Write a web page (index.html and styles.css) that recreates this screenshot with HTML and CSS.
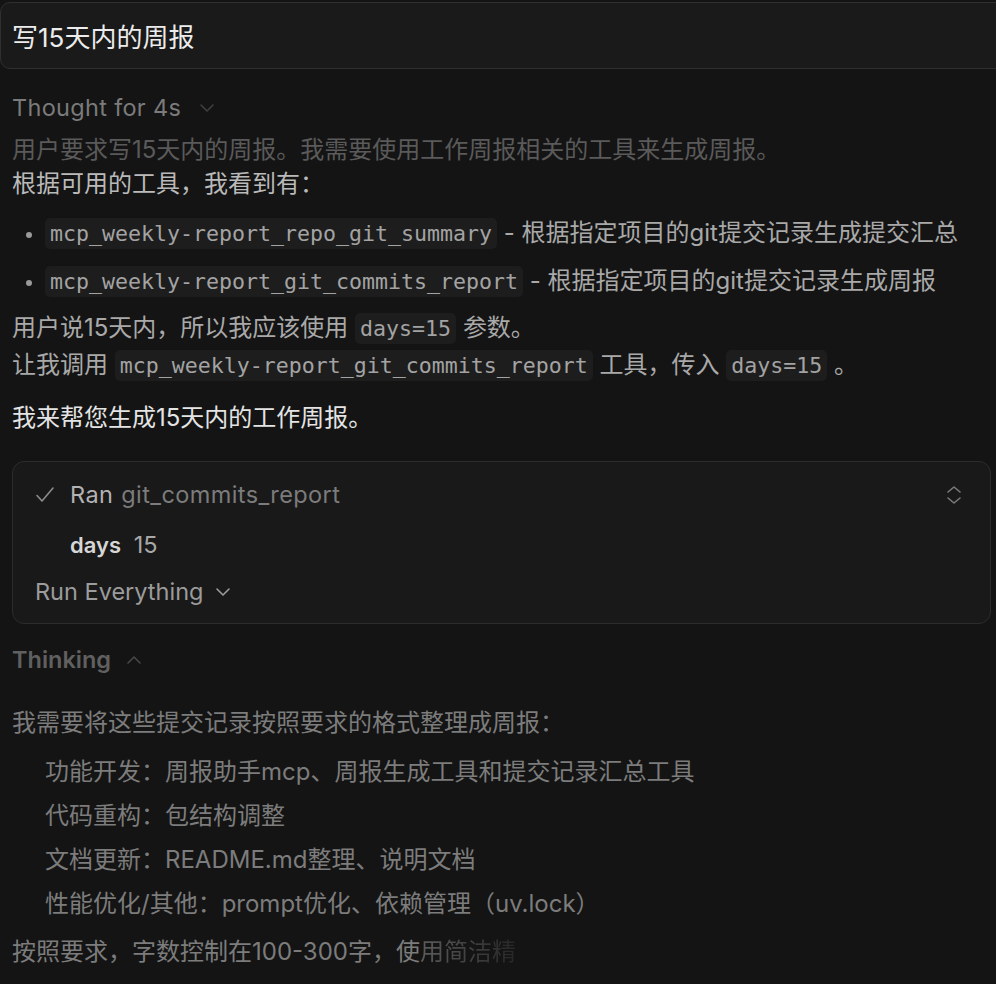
FILE: index.html
```html
<!DOCTYPE html>
<html lang="zh-CN">

<head>
  <meta charset="UTF-8" />
  <meta name="viewport" content="width=device-width, initial-scale=1" />
  <title>写15天内的周报</title>
  <link rel="stylesheet" href="styles.css">
</head>

<body>
  <main class="chat">
    <div class="prompt">写15天内的周报</div>

    <section class="thought">
      <div class="toggle">
        Thought <span class="muted">for 4s</span>
        <svg class="chev" width="16" height="10" viewBox="0 0 16 10"><path d="M2 2l6 6 6-6" /></svg>
      </div>
      <div class="thought-body">
        <p class="faded">用户要求写15天内的周报。我需要使用工作周报相关的工具来生成周报。</p>
        <p>根据可用的工具，我看到有：</p>
        <ul class="tools">
          <li><code>mcp_weekly-report_repo_git_summary</code> - 根据指定项目的git提交记录生成提交汇总</li>
          <li><code>mcp_weekly-report_git_commits_report</code> - 根据指定项目的git提交记录生成周报</li>
        </ul>
        <p class="code-line">用户说15天内，所以我应该使用 <code>days=15</code> 参数。<br>让我调用 <code>mcp_weekly-report_git_commits_report</code> 工具，传入 <code>days=15</code> 。</p>
      </div>
    </section>

    <p class="answer">我来帮您生成15天内的工作周报。</p>

    <div class="tool-call">
      <div class="tool-head">
        <svg class="check" width="20" height="18" viewBox="0 0 20 18"><path d="M2 9.5l5 5.5L18 2" /></svg>
        <span class="ran">Ran</span>
        <span class="tool-name">git_commits_report</span>
        <svg class="expand" width="16" height="20" viewBox="0 0 16 20"><path d="M2 7l6-5 6 5M2 13l6 5 6-5" /></svg>
      </div>
      <div class="args"><b>days</b> 15</div>
      <div class="run-mode">
        Run Everything
        <svg class="chev" width="16" height="10" viewBox="0 0 16 10"><path d="M2 2l6 6 6-6" /></svg>
      </div>
    </div>

    <section class="thinking">
      <div class="toggle">
        Thinking
        <svg class="chev" width="16" height="10" viewBox="0 0 16 10"><path d="M2 8l6-6 6 6" /></svg>
      </div>
      <p class="lead">我需要将这些提交记录按照要求的格式整理成周报：</p>
      <ul class="steps">
        <li>功能开发：周报助手mcp、周报生成工具和提交记录汇总工具</li>
        <li>代码重构：包结构调整</li>
        <li>文档更新：README.md整理、说明文档</li>
        <li>性能优化/其他：prompt优化、依赖管理（uv.lock）</li>
      </ul>
      <p class="tail">按照要求，字数控制在100-300字，使<span class="fade">用简洁精</span></p>
    </section>
  </main>
</body>

</html>
```

FILE: styles.css
```css
* {
  box-sizing: border-box;
}

html,
body {
  margin: 0;
  background-color: #141414;
  overflow: hidden;
}

body {
  font-family: "Inter", "Noto Sans CJK SC", sans-serif;
  font-size: 24px;
  color: #a9a9a9;
}

p {
  margin: 0;
}

ul {
  margin: 0;
  padding: 0;
}

code {
  font-family: "DejaVu Sans Mono", "Noto Sans CJK SC", monospace;
  font-size: 21.6px;
  line-height: 1;
  background-color: #1d1d1d;
  border-radius: 5px;
  padding: 3px 5px;
  color: #a3a3a3;
}

svg path {
  fill: none;
  stroke: currentColor;
  stroke-width: 1.6;
  stroke-linecap: round;
  stroke-linejoin: round;
}

.chat {
  padding: 2px 0 0 12px;
}

/* user message */
.prompt {
  margin-left: -12px;
  width: calc(100% + 40px);
  background-color: #1a1a1a;
  border: 1px solid #2f2f2f;
  border-radius: 10px;
  padding: 18px 0 14px 11px;
  font-size: 26px;
  line-height: 33px;
  color: #ececec;
}

.toggle {
  display: flex;
  align-items: center;
  gap: 7px;
  font-size: 23.5px;
  letter-spacing: 0.3px;
  line-height: 32px;
}

/* thought */
.thought {
  margin-top: 23px;
}

.thought .toggle {
  color: #7b7b7b;
}

.thought .toggle .chev {
  color: #3f3f3f;
  margin-left: 11px;
}

.thought-body {
  margin-top: 9px;
}

.thought-body p {
  line-height: 34px;
}

.thought-body .faded {
  color: #5a5a5a;
}

.thought-body p:nth-child(2) {
  color: #bababa;
}

.tools {
  margin: 15px 0 11px;
  padding-left: 33px;
}

.tools li {
  line-height: 34px;
}

.tools li::marker {
  color: #9a9a9a;
  font-size: 20px;
}

.tools li + li {
  margin-top: 14px;
}

.thought-body .code-line {
  line-height: 37px;
}

.answer {
  margin-top: 18px;
  line-height: 34px;
  color: #e4e4e4;
}

/* tool call card */
.tool-call {
  margin: 26px 5px 0 0;
  background-color: #191919;
  border: 1px solid #2c2c2c;
  border-radius: 12px;
  padding: 17px 22px 15px;
}

.tool-head,
.args,
.run-mode {
  font-size: 23.5px;
  letter-spacing: 0.4px;
  line-height: 32px;
}

.tool-head {
  display: flex;
  align-items: center;
}

.tool-head .check {
  color: #8c8c8c;
  margin-right: 15px;
}

.tool-head .ran {
  color: #b3b3b3;
  margin-right: 8px;
}

.tool-head .tool-name {
  color: #7c7c7c;
}

.tool-head .expand {
  margin-left: auto;
  margin-right: 6px;
  color: #7a7a7a;
}

.args {
  margin-top: 18px;
  padding-left: 35px;
  letter-spacing: 0;
  color: #a8a8a8;
}

.args b {
  font-size: 22px;
  color: #d6d6d6;
  font-weight: 600;
  margin-right: 6px;
}

.run-mode {
  display: flex;
  align-items: center;
  margin-top: 15px;
  letter-spacing: 0;
  color: #9c9c9c;
}

.run-mode .chev {
  margin-left: 12px;
}

/* thinking */
.thinking {
  margin-top: 20px;
  color: #7c7c7c;
}

.thinking .toggle {
  color: #606060;
  font-weight: 600;
  letter-spacing: 0;
}

.thinking .toggle .chev {
  color: #474747;
  margin-left: 8px;
}

.thinking p,
.steps li {
  line-height: 34px;
}

.thinking .lead {
  margin-top: 30px;
}

.steps {
  list-style: none;
  margin-top: 15px;
  padding-left: 33px;
}

.steps li + li {
  margin-top: 10px;
}

.thinking .tail {
  margin-top: 14px;
}

.fade {
  background: linear-gradient(90deg, #5c5c5c, #262626);
  -webkit-background-clip: text;
  background-clip: text;
  color: transparent;
}
```
